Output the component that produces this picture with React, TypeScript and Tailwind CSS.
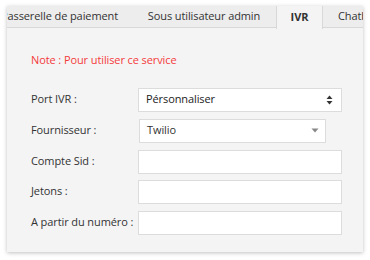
import React from "react";

const font = { fontFamily: '"Open Sans", "Liberation Sans", sans-serif' };

function Row({ label, children, className = "" }: { label: string; children: React.ReactNode; className?: string }) {
  return (
    <div className={`flex items-center h-[24px] ${className}`}>
      <div className="w-[107px] shrink-0 text-[11px] tracking-[-0.1px] text-[#333] whitespace-nowrap">{label}</div>
      {children}
    </div>
  );
}

function Input() {
  return <div className="w-[204px] h-[24px] bg-white border border-[#dcdcdc]" />;
}

export default function App() {
  return (
    <div className="w-[370px] h-[260px] bg-white pl-[7px] pt-[6px]" style={font}>
      <div className="w-[356px] h-[246px] bg-[#f4f4f4] shadow-[0_1px_4px_rgba(0,0,0,0.25)] overflow-hidden relative">
        <div className="flex h-[22px] bg-[#ededed] border-b border-[#d8d8d8] ml-[-22px] text-[11px] tracking-[-0.1px] text-[#333] whitespace-nowrap">
          <div className="w-[149px] shrink-0 flex items-center justify-center">Passerelle de paiement</div>
          <div className="w-[140px] shrink-0 flex items-center justify-center">Sous utilisateur admin</div>
          <div className="w-[47px] shrink-0 flex items-center justify-center font-bold bg-[#f4f4f4] border-l border-r border-[#d8d8d8] h-[23px] ml-[2px]">IVR</div>
          <div className="shrink-0 flex items-center pl-[15px]">Chatbot</div>
        </div>
        <div className="pl-[24px]">
          <div className="mt-[24px] text-[11px] tracking-[-0.1px] text-[#f53b3b]">Note : Pour utiliser ce service</div>
          <Row label="Port IVR :" className="mt-[19px]">
            <div className="w-[204px] h-[24px] bg-white border border-[#dcdcdc] flex items-center justify-between pl-[7px] pr-[8px] text-[11px] tracking-[-0.1px] text-[#222]">
              <span>Pérsonnaliser</span>
              <svg width="7" height="10" viewBox="0 0 7 10">
                <path d="M3.5 0.5 L6.5 4 L0.5 4 Z" fill="#333" />
                <path d="M3.5 9.5 L6.5 6 L0.5 6 Z" fill="#333" />
              </svg>
            </div>
          </Row>
          <Row label="Fournisseur :" className="mt-[7px]">
            <div className="ml-[1px] w-[187px] h-[24px] bg-white border border-[#dcdcdc] flex items-center justify-between pl-[7px] pr-[6px] text-[11px] tracking-[-0.1px] text-[#333]">
              <span>Twilio</span>
              <svg width="8" height="5" viewBox="0 0 8 5">
                <path d="M0.5 0.5 L7.5 0.5 L4 4.5 Z" fill="#888" />
              </svg>
            </div>
          </Row>
          <Row label="Compte Sid :" className="mt-[7px]">
            <Input />
          </Row>
          <Row label="Jetons :" className="mt-[6px]">
            <Input />
          </Row>
          <Row label="A partir du numéro :" className="mt-[7px]">
            <Input />
          </Row>
        </div>
      </div>
    </div>
  );
}
